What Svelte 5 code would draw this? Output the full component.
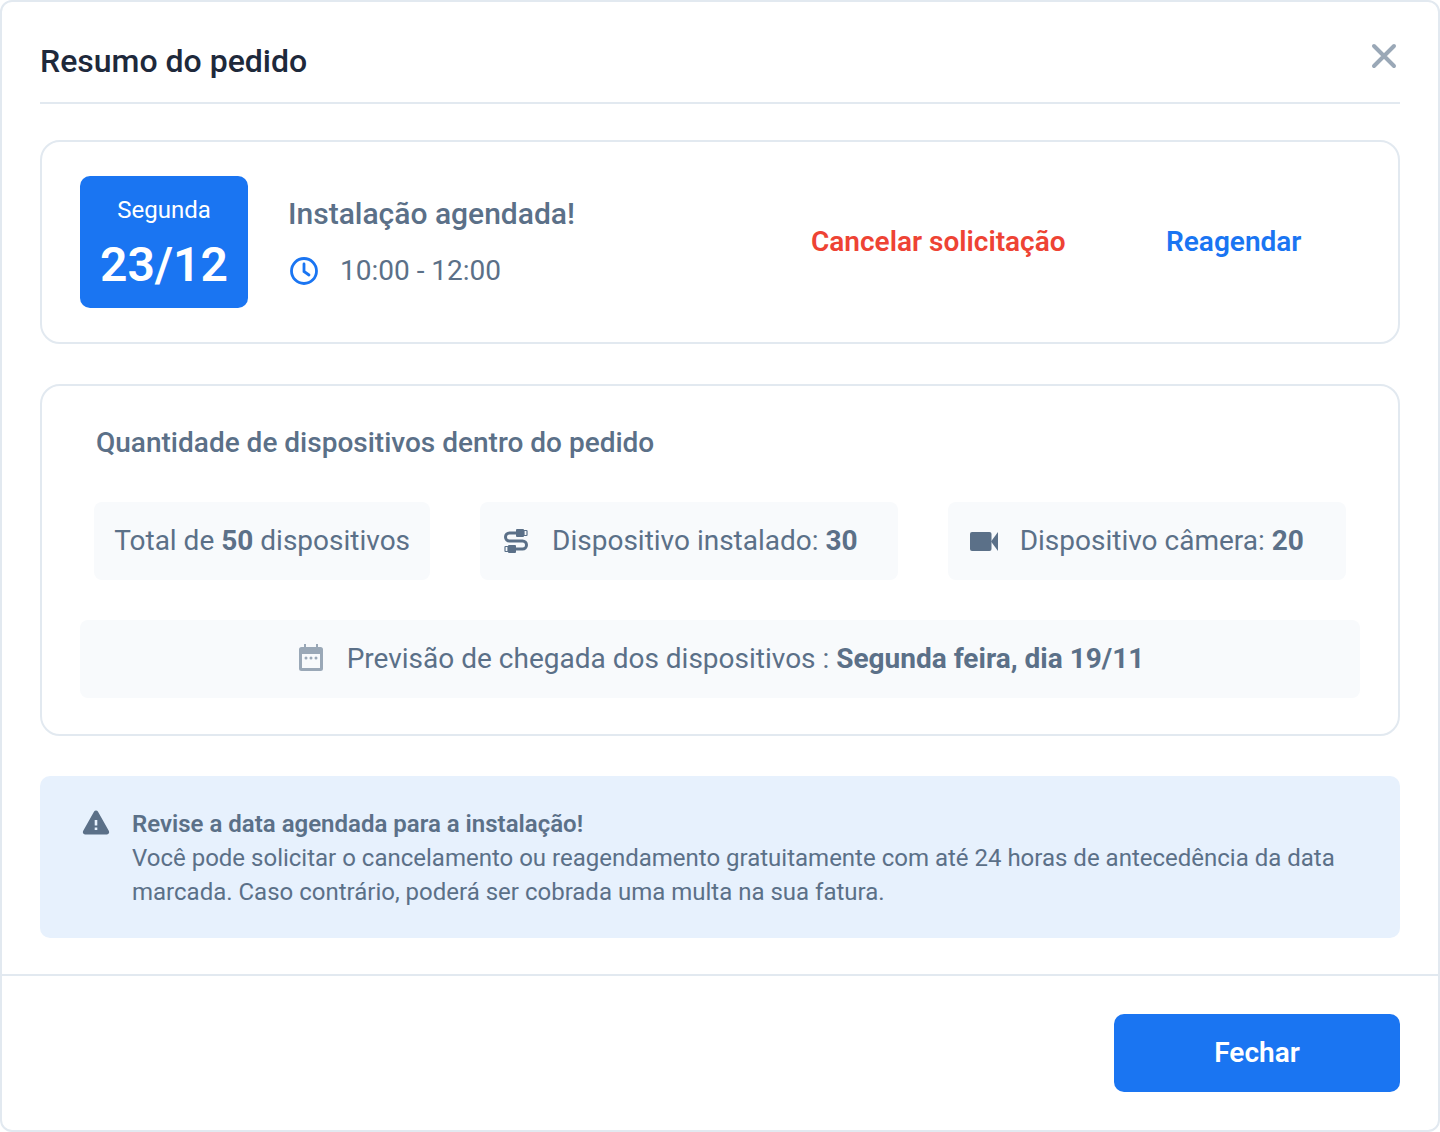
<script>
  const chips = [
    { icon: null, pre: 'Total de ', bold: '50', post: ' dispositivos' },
    { icon: 'cable', pre: 'Dispositivo instalado: ', bold: '30', post: '' },
    { icon: 'camera', pre: 'Dispositivo câmera: ', bold: '20', post: '' }
  ];
</script>

<div class="modal">
  <header class="head">
    <h1>Resumo do pedido</h1>
    <button class="close" aria-label="Fechar">
      <svg width="28" height="28" viewBox="0 0 28 28"><path d="M4 4l20 20M24 4L4 24" /></svg>
    </button>
  </header>

  <main class="body">
    <section class="card sched">
      <div class="date">
        <span class="day">Segunda</span>
        <strong>23/12</strong>
      </div>
      <div class="info">
        <h2>Instalação agendada!</h2>
        <div class="time">
          <svg width="32" height="32" viewBox="0 0 32 32"><circle cx="16" cy="16" r="12.5" /><path d="M16 9v7.5l5 3.5" /></svg>
          <span>10:00 - 12:00</span>
        </div>
      </div>
      <a class="action cancel" href="#c">Cancelar solicitação</a>
      <a class="action again" href="#r">Reagendar</a>
    </section>

    <section class="card devices">
      <h3>Quantidade de dispositivos dentro do pedido</h3>
      <div class="chips">
        {#each chips as c}
          <div class="chip {c.icon ?? ''}">
            {#if c.icon === 'cable'}
              <svg class="ic" width="28" height="28" viewBox="0 0 28 28">
                <path class="ln" d="M15 6H7.500a4 4 0 0 0 0 8h13a4 4 0 0 1 0 8H13" />
                <rect x="14" y="2" width="8" height="8" rx="1" />
                <rect class="tip" x="22" y="3.500" width="3" height="5" rx=".5" />
                <rect x="6" y="18" width="8" height="8" rx="1" />
                <rect class="tip" x="3" y="19.500" width="3" height="5" rx=".5" />
              </svg>
            {:else if c.icon === 'camera'}
              <svg class="ic" width="28" height="19" viewBox="0 0 28 19">
                <rect x="0" y="0" width="21.500" height="19" rx="2" /><path d="M21 9.500L28 0v19z" />
              </svg>
            {/if}
            <span>{c.pre}<b>{c.bold}</b>{c.post}</span>
          </div>
        {/each}
      </div>
      <div class="arrival">
        <svg width="24" height="27" viewBox="0 0 24 27">
          <path fill-rule="evenodd" d="M5 0h2v3h10V0h2v3h2.500A2.500 2.500 0 0 1 24 5.500v19a2.500 2.500 0 0 1-2.500 2.500h-19A2.500 2.500 0 0 1 0 24.500v-19A2.500 2.500 0 0 1 2.500 3H5zM3 10v14h18V10z" />
          <circle cx="7" cy="14" r="1.500" /><circle cx="12" cy="14" r="1.500" /><circle cx="17" cy="14" r="1.500" />
        </svg>
        <span>Previsão de chegada dos dispositivos : <b>Segunda feira, dia 19/11</b></span>
      </div>
    </section>

    <section class="alert">
      <svg width="28" height="26" viewBox="0 0 28 26">
        <path fill-rule="evenodd" d="M14 1.500c.8 0 1.500.4 1.900 1.100l11 19.500c.8 1.500-.2 3.400-1.900 3.400H3c-1.700 0-2.700-1.900-1.900-3.400l11-19.500c.4-.7 1.100-1.100 1.900-1.100zM12.700 11v5.500h2.600V11zM12.700 18.500V21h2.600v-2.500z" />
      </svg>
      <p><b>Revise a data agendada para a instalação!</b><br />Você pode solicitar o cancelamento ou reagendamento gratuitamente com até 24 horas de antecedência da data marcada. Caso contrário, poderá ser cobrada uma multa na sua fatura.</p>
    </section>
  </main>

  <footer class="foot">
    <button class="primary">Fechar</button>
  </footer>
</div>

<style>
  :global(body) { margin: 0; background: #fff; }
  .modal {
    box-sizing: border-box; width: 1440px; height: 1132px;
    border: 2px solid #e2e9f0; border-radius: 12px; background: #fff;
    font-family: Roboto, sans-serif; color: #5b7088;
    display: flex; flex-direction: column;
  }
  .head {
    height: 100px; margin: 0 38px; border-bottom: 2px solid #e2e9f0;
    display: flex; justify-content: space-between; align-items: center;
  }
  h1 { margin: 18px 0 0; font-size: 32px; line-height: 40px; font-weight: 500; color: #1e293b; }
  .close { border: 0; background: none; padding: 0; margin: 40px 2px 0 0; display: flex; align-self: flex-start; }
  .close svg path { stroke: #9aa8b7; stroke-width: 4; stroke-linecap: round; fill: none; }
  .body { padding: 36px 38px 0; display: flex; flex-direction: column; gap: 40px; flex: 1; }
  .card { border: 2px solid #e2e9f0; border-radius: 20px; box-sizing: border-box; }
  .sched { height: 204px; display: flex; align-items: center; padding: 0 38px; }
  .date {
    box-sizing: border-box; width: 168px; height: 132px; background: #1a75f2; border-radius: 10px; color: #fff;
    display: flex; flex-direction: column; align-items: center;
  }
  .day { font-size: 24px; line-height: 28px; margin-top: 20px; }
  .date strong { font-size: 48px; line-height: 56px; font-weight: 600; margin-top: 13px; }
  .info { margin: 0 0 2px 40px; width: 523px; }
  h2 { margin: 0; font-size: 30px; line-height: 40px; font-weight: 500; }
  .time { display: flex; align-items: center; margin-top: 19px; font-size: 28px; line-height: 36px; }
  .time svg { margin-right: 20px; }
  .time svg circle, .time svg path { fill: none; stroke: #1a75f2; stroke-width: 2.800; stroke-linecap: round; }
  .action { font-size: 28px; font-weight: 600; text-decoration: none; margin-bottom: 2px; }
  .cancel { color: #ee4334; width: 355px; }
  .again { color: #1a75f2; }
  .devices { height: 352px; padding: 0 38px; }
  h3 { margin: 37px 0 0 16px; font-size: 28px; line-height: 40px; font-weight: 500; }
  .chips { display: flex; justify-content: center; gap: 50px; margin-top: 39px; }
  .chip {
    box-sizing: border-box; height: 78px; padding: 0 20px 2px; background: #f8fafc; border-radius: 8px;
    display: flex; align-items: center; gap: 22px; font-size: 28px;
  }
  .cable { padding: 0 40px 2px 22px; }
  .camera { padding: 0 42px 2px 22px; }
  .ic { flex: none; margin-top: 2px; }
  .ic rect, .ic path:not(.ln) { fill: #5b7088; }
  .ic .tip { fill: #f8fafc; stroke: #5b7088; stroke-width: 1.200; }
  .ln { fill: none; stroke: #5b7088; stroke-width: 3; }
  b { font-weight: 700; }
  .arrival {
    box-sizing: border-box; height: 78px; margin-top: 40px; padding: 0 0 2px 3px; background: #f8fafc; border-radius: 8px;
    display: flex; align-items: center; justify-content: center; gap: 24px; font-size: 28px;
  }
  .arrival svg { fill: #9aa8b7; flex: none; margin-top: -2px; }
  .alert {
    height: 162px; box-sizing: border-box; background: #e7f1fd; border-radius: 10px;
    display: flex; align-items: flex-start; padding: 31px 42px 0; gap: 22px;
  }
  .alert svg { fill: #5b7088; flex: none; margin-top: 2px; }
  .alert p { margin: 0; font-size: 24px; line-height: 34px; }
  .alert b { font-weight: 600; }
  .foot {
    height: 156px; box-sizing: border-box; border-top: 2px solid #e2e9f0;
    display: flex; justify-content: flex-end; padding: 38px 38px 0; flex: none;
  }
  .primary {
    width: 286px; height: 78px; padding: 0 0 2px; border: 0; border-radius: 10px; background: #1a75f2; color: #fff;
    font-family: inherit; font-size: 28px; font-weight: 600;
  }
</style>
